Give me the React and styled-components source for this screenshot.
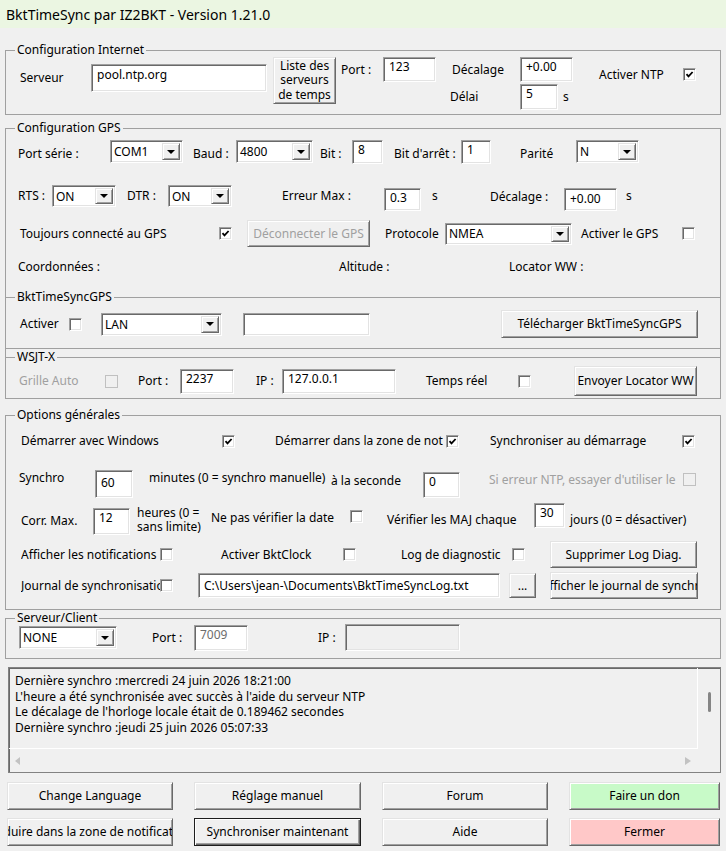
import React from "react";
import styled, { createGlobalStyle, css } from "styled-components";

const GlobalStyle = createGlobalStyle`
  html, body {
    margin: 0;
    padding: 0;
    background: #f0f0f0;
  }
`;

// shared bits for every control placed in a row
const place = css`
  flex: none;
  box-sizing: border-box;
  margin-left: ${(p) => p.$ml || 0}px;
  ${(p) =>
    p.$top != null &&
    css`
      align-self: flex-start;
      margin-top: ${p.$top}px;
    `}
`;

const sunken = css`
  border: 1px solid;
  border-color: #a0a0a0 #ffffff #ffffff #a0a0a0;
  box-shadow: inset 1px 1px #696969, inset -1px -1px #e3e3e3;
`;

const raised = css`
  border: 1px solid;
  border-color: #e3e3e3 #696969 #696969 #e3e3e3;
  box-shadow: inset 1px 1px #ffffff, inset -1px -1px #a0a0a0;
`;

const Window = styled.div`
  width: 726px;
  height: 851px;
  overflow: hidden;
  background: #f0f0f0;
  font-family: "Noto Sans", "DejaVu Sans", sans-serif;
  font-size: 12px;
  color: #000;
  display: flex;
  flex-direction: column;
`;

const TitleBar = styled.div`
  flex: none;
  height: 28px;
  padding-left: 6px;
  background: #ebf6e2;
  display: flex;
  align-items: center;
  font-size: 14px;
`;

const Body = styled.div`
  padding: 14px 5px 0 5px;
  display: flex;
  flex-direction: column;
`;

const Group = styled.fieldset`
  margin: ${(p) => p.$mt || 0}px ${(p) => (p.$nested ? -1 : 0)}px
    ${(p) => (p.$last ? -1 : 0)}px;
  padding: 0 0 ${(p) => p.$pb || 0}px;
  border: 1px solid #a0a0a0;
  min-width: 0;
`;

const Legend = styled.legend`
  margin-left: 9px;
  padding: 0 2px;
  line-height: 16px;
`;

const Row = styled.div`
  display: flex;
  align-items: ${(p) => p.$align || "center"};
  height: ${(p) => p.$h}px;
  margin-top: ${(p) => p.$mt || 0}px;
`;

const Stack = styled.div`
  ${place};
  width: ${(p) => p.$w}px;
  display: flex;
  flex-direction: column;
  gap: 2px;
`;

const Label = styled.span`
  ${place};
  width: ${(p) => (p.$w ? `${p.$w}px` : "auto")};
  line-height: ${(p) => p.$lh || 16}px;
  white-space: nowrap;
  overflow: ${(p) => (p.$clip ? "hidden" : "visible")};
  color: ${(p) => (p.$disabled ? "#a0a0a0" : "#000")};
`;

const TextBox = styled.div`
  ${place};
  ${sunken};
  width: ${(p) => p.$w}px;
  height: ${(p) => p.$h || 24}px;
  padding: ${(p) => 1 + (p.$pt || 0)}px 4px 0 5px;
  line-height: 16px;
  white-space: nowrap;
  overflow: hidden;
  background: ${(p) => (p.$readonly ? "#f0f0f0" : "#fff")};
  color: ${(p) => (p.$dim ? "#6d6d6d" : "#000")};
`;

const Combo = styled.div`
  ${place};
  ${sunken};
  width: ${(p) => p.$w}px;
  height: ${(p) => p.$h || 23}px;
  padding: 2px;
  background: #fff;
  display: flex;
`;

const ComboText = styled.span`
  flex: 1;
  padding-left: 1px;
  display: flex;
  align-items: center;
  white-space: nowrap;
  overflow: hidden;
`;

const DropButton = styled.span`
  ${raised};
  box-sizing: border-box;
  width: 18px;
  display: flex;
  align-items: center;
  justify-content: center;
  background: #f0f0f0;

  &::after {
    content: "";
    border-left: 4px solid transparent;
    border-right: 4px solid transparent;
    border-top: 4px solid #000;
  }
`;

const CheckBox = styled.span`
  ${place};
  width: 13px;
  height: 13px;
  border: 1px solid;
  border-color: ${(p) =>
    p.$disabled ? "#c0c0c0" : "#a0a0a0 #ffffff #ffffff #a0a0a0"};
  box-shadow: ${(p) =>
    p.$disabled ? "none" : "inset 1px 1px #696969, inset -1px -1px #e3e3e3"};
  background: ${(p) => (p.$disabled ? "#f0f0f0" : "#fff")};
  display: flex;
  align-items: center;
  justify-content: center;
`;

const Button = styled.button`
  ${place};
  ${raised};
  ${(p) =>
    p.$primary &&
    css`
      border-color: #1e1e1e;
      box-shadow: inset 1px 1px #ffffff, inset -1px -1px #696969,
        inset -2px -2px #a0a0a0;
    `}
  width: ${(p) => p.$w}px;
  height: ${(p) => p.$h || 28}px;
  padding: 0;
  font: inherit;
  line-height: ${(p) => p.$lh || 16}px;
  color: ${(p) => (p.$disabled ? "#a0a0a0" : "#000")};
  background: ${(p) => p.$bg || "#f0f0f0"};
  display: flex;
  align-items: center;
  justify-content: center;
  text-align: center;
  white-space: nowrap;
  overflow: hidden;
`;

const LogBox = styled.div`
  margin: 8px 5px 0 8px;
  height: 106px;
  box-sizing: border-box;
  border: 1px solid #828282;
  box-shadow: inset 1px 1px #696969;
  display: grid;
  grid-template-columns: 1fr 22px;
  grid-template-rows: 1fr 23px;
`;

const LogText = styled.div`
  border-right: 1px solid #fff;
  border-bottom: 1px solid #fff;
  padding: 5px 0 0 6px;
  line-height: 15.6px;
  white-space: pre;
  overflow: hidden;
`;

const VScroll = styled.div`
  display: flex;
  justify-content: center;
`;

const Thumb = styled.span`
  margin-top: 24px;
  width: 3px;
  height: 20px;
  border-radius: 2px;
  background: #858585;
`;

const HScroll = styled.div`
  display: flex;
  align-items: center;
  justify-content: space-between;
  padding: 0 7px 0 6px;
`;

const Arrow = styled.span`
  width: 0;
  height: 0;
  border-top: 4px solid transparent;
  border-bottom: 4px solid transparent;
  ${(p) =>
    p.$dir === "left"
      ? "border-right: 5px solid #c2c2c2;"
      : "border-left: 6px solid #c2c2c2;"}
`;

const ButtonGrid = styled.div`
  margin: 9px 0 0 7px;
  display: grid;
  grid-template-columns: 166px 167px 166px 151px;
  grid-auto-rows: 28px;
  column-gap: 21px;
  row-gap: 8px;
`;

const Tick = () => (
  <svg width="9" height="9" viewBox="0 0 9 9">
    <polyline
      points="1.5,4.2 3.5,6.4 7.6,2"
      fill="none"
      stroke="#000"
      strokeWidth="1.8"
    />
  </svg>
);

const Check = ({ checked, ...rest }) => (
  <CheckBox {...rest}>{checked && <Tick />}</CheckBox>
);

const Select = ({ value, ...rest }) => (
  <Combo {...rest}>
    <ComboText>{value}</ComboText>
    <DropButton />
  </Combo>
);

const logLines = [
  "Dernière synchro :mercredi 24 juin 2026 18:21:00",
  "L'heure a été synchronisée avec succès à l'aide du serveur NTP",
  "Le décalage de l'horloge locale était de 0.189462 secondes",
  "Dernière synchro :jeudi 25 juin 2026 05:07:33",
];

const bottomButtons = [
  { text: "Change Language" },
  { text: "Réglage manuel" },
  { text: "Forum" },
  { text: "Faire un don", bg: "#c8fac8" },
  { text: "Réduire dans la zone de notification" },
  { text: "Synchroniser maintenant", primary: true },
  { text: "Aide" },
  { text: "Fermer", bg: "#ffc8c8" },
];

const App = () => {
  return (
    <Window>
      <GlobalStyle />
      <TitleBar>BktTimeSync par IZ2BKT - Version 1.21.0</TitleBar>
      <Body>
        <Group>
          <Legend>Configuration Internet</Legend>
          <Row $h={56} $align="flex-start">
            <Label $ml={14} $w={71} $top={12}>
              Serveur
            </Label>
            <TextBox $w={176} $h={28} $top={6} $pt={1}>
              pool.ntp.org
            </TextBox>
            <Button $ml={6} $w={63} $h={47} $top={-1} $lh={14.5}>
              Liste des
              <br />
              serveurs
              <br />
              de temps
            </Button>
            <Label $ml={5} $w={42} $top={4}>
              Port :
            </Label>
            <TextBox $w={53} $h={25} $top={-1}>
              123
            </TextBox>
            <Stack $w={137} $top={-1}>
              <Row $h={25}>
                <Label $ml={16} $w={68}>
                  Décalage
                </Label>
                <TextBox $w={53} $h={25}>
                  +0.00
                </TextBox>
              </Row>
              <Row $h={26}>
                <Label $ml={14} $w={70}>
                  Délai
                </Label>
                <TextBox $w={38} $h={26}>
                  5
                </TextBox>
                <Label $ml={5}>s</Label>
              </Row>
            </Stack>
            <Label $ml={26} $w={84} $top={9}>
              Activer NTP
            </Label>
            <Check checked $top={10} />
          </Row>
        </Group>

        <Group $mt={5}>
          <Legend>Configuration GPS</Legend>
          <Row $h={24} $mt={4}>
            <Label $ml={12} $w={92} $top={6}>
              Port série :
            </Label>
            <Select $w={73} $top={0} value="COM1" />
            <Label $ml={10} $w={43} $top={6}>
              Baud :
            </Label>
            <Select $w={77} $top={0} value="4800" />
            <Label $ml={7} $w={32} $top={6}>
              Bit :
            </Label>
            <TextBox $w={31}>8</TextBox>
            <Label $ml={11} $w={67} $top={6}>
              Bit d'arrêt :
            </Label>
            <TextBox $w={30}>1</TextBox>
            <Label $ml={29} $w={56} $top={6}>
              Parité
            </Label>
            <Select $w={63} $top={0} value="N" />
          </Row>

          <Row $h={26} $mt={21} $align="flex-start">
            <Label $ml={12} $w={34} $top={3}>
              RTS :
            </Label>
            <Select $w={64} $h={22} value="ON" />
            <Label $ml={11} $w={41} $top={3}>
              DTR :
            </Label>
            <Select $w={64} $h={22} value="ON" />
            <Label $ml={50} $w={102} $top={3}>
              Erreur Max :
            </Label>
            <TextBox $w={37} $h={23} $top={3}>
              0.3
            </TextBox>
            <Label $ml={11} $w={58} $top={3}>
              s
            </Label>
            <Label $w={74} $top={4}>
              Décalage :
            </Label>
            <TextBox $w={53} $h={23} $top={3} $pt={1}>
              +0.00
            </TextBox>
            <Label $ml={9} $top={3}>
              s
            </Label>
          </Row>

          <Row $h={27} $mt={9}>
            <Label $ml={14} $w={199}>
              Toujours connecté au GPS
            </Label>
            <Check checked />
            <Button $ml={15} $w={123} $h={27} $disabled>
              Déconnecter le GPS
            </Button>
            <Label $ml={15} $w={60}>
              Protocole
            </Label>
            <Select $w={127} $h={22} value="NMEA" />
            <Label $ml={9} $w={101}>
              Activer le GPS
            </Label>
            <Check />
          </Row>

          <Row $h={20} $mt={10}>
            <Label $ml={12} $w={321}>
              Coordonnées :
            </Label>
            <Label $w={170}>Altitude :</Label>
            <Label>Locator WW :</Label>
          </Row>

          <Group $nested $mt={12} $pb={10}>
            <Legend>BktTimeSyncGPS</Legend>
            <Row $h={28} $mt={5}>
              <Label $ml={14} $w={49}>
                Activer
              </Label>
              <Check />
              <Select $ml={19} $w={121} value="LAN" />
              <TextBox $ml={21} $w={127} $h={23} />
              <Button $ml={131} $w={197}>
                Télécharger BktTimeSyncGPS
              </Button>
            </Row>
          </Group>

          <Group $nested $last $pb={2}>
            <Legend>WSJT-X</Legend>
            <Row $h={30} $mt={1}>
              <Label $ml={13} $w={86} $disabled>
                Grille Auto
              </Label>
              <Check $disabled />
              <Label $ml={20} $w={42}>
                Port :
              </Label>
              <TextBox $w={54} $h={25}>
                2237
              </TextBox>
              <Label $ml={22} $w={26}>
                IP :
              </Label>
              <TextBox $w={114} $h={25}>
                127.0.0.1
              </TextBox>
              <Label $ml={30} $w={92}>
                Temps réel
              </Label>
              <Check />
              <Button $ml={43} $w={123} $h={30}>
                Envoyer Locator WW
              </Button>
            </Row>
          </Group>
        </Group>

        <Group $mt={8} $pb={10}>
          <Legend>Options générales</Legend>
          <Row $h={20} $mt={8}>
            <Label $ml={15} $w={201}>
              Démarrer avec Windows
            </Label>
            <Check checked />
            <Label $ml={40} $w={168} $clip>
              Démarrer dans la zone de notification
            </Label>
            <Check checked $ml={3} />
            <Label $ml={31} $w={192}>
              Synchroniser au démarrage
            </Label>
            <Check checked />
          </Row>

          <Row $h={28} $mt={19} $align="flex-start">
            <Label $ml={13} $w={76} $top={0}>
              Synchro
            </Label>
            <TextBox $w={38} $h={28} $top={0} $pt={3}>
              60
            </TextBox>
            <Label $ml={16} $w={182} $top={0}>
              minutes (0 = synchro manuelle)
            </Label>
            <Label $w={92} $top={3}>
              à la seconde
            </Label>
            <TextBox $w={37} $h={26} $top={2}>
              0
            </TextBox>
            <Label $ml={29} $w={187} $top={2} $clip $disabled>
              Si erreur NTP, essayer d'utiliser le GPS
            </Label>
            <Check $disabled $ml={7} $top={3} />
          </Row>

          <Row $h={32} $mt={5} $align="flex-start">
            <Label $ml={15} $w={72} $top={10}>
              Corr. Max.
            </Label>
            <TextBox $w={37} $h={27} $top={5}>
              12
            </TextBox>
            <Label $ml={7} $w={74} $top={3} $lh={14}>
              heures (0 =
              <br />
              sans limite)
            </Label>
            <Label $w={139} $top={7}>
              Ne pas vérifier la date
            </Label>
            <Check $top={7} />
            <Label $ml={24} $w={147} $top={9}>
              Vérifier les MAJ chaque
            </Label>
            <TextBox $w={31} $h={25} $top={0}>
              30
            </TextBox>
            <Label $ml={5} $top={9}>
              jours (0 = désactiver)
            </Label>
          </Row>

          <Row $h={27} $mt={6}>
            <Label $ml={15} $w={139} $clip>
              Afficher les notifications
            </Label>
            <Check />
            <Label $ml={48} $w={122}>
              Activer BktClock
            </Label>
            <Check />
            <Label $ml={45} $w={111}>
              Log de diagnostic
            </Label>
            <Check />
            <Button $ml={25} $w={147} $h={27}>
              Supprimer Log Diag.
            </Button>
          </Row>

          <Row $h={27} $mt={4}>
            <Label $ml={15} $w={139} $clip>
              Journal de synchronisation
            </Label>
            <Check />
            <TextBox $ml={25} $w={302} $h={25} $pt={3}>
              C:\Users\jean-\Documents\BktTimeSyncLog.txt
            </TextBox>
            <Button $ml={9} $w={27} $h={25}>
              ...
            </Button>
            <Button $ml={14} $w={148} $h={27}>
              <span>Afficher le journal de synchro</span>
            </Button>
          </Row>
        </Group>

        <Group $pb={7}>
          <Legend>Serveur/Client</Legend>
          <Row $h={27} $mt={-2}>
            <Select $ml={13} $w={98} value="NONE" />
            <Label $ml={35} $w={42}>
              Port :
            </Label>
            <TextBox $w={54} $h={26} $dim>
              7009
            </TextBox>
            <Label $ml={70} $w={27}>
              IP :
            </Label>
            <TextBox $w={115} $h={27} $readonly />
          </Row>
        </Group>
      </Body>

      <LogBox>
        <LogText>{logLines.join("\n")}</LogText>
        <VScroll>
          <Thumb />
        </VScroll>
        <HScroll>
          <Arrow $dir="left" />
          <Arrow $dir="right" />
        </HScroll>
      </LogBox>

      <ButtonGrid>
        {bottomButtons.map((b) => (
          <Button key={b.text} $bg={b.bg} $primary={b.primary}>
            <span>{b.text}</span>
          </Button>
        ))}
      </ButtonGrid>
    </Window>
  );
};

export default App;
